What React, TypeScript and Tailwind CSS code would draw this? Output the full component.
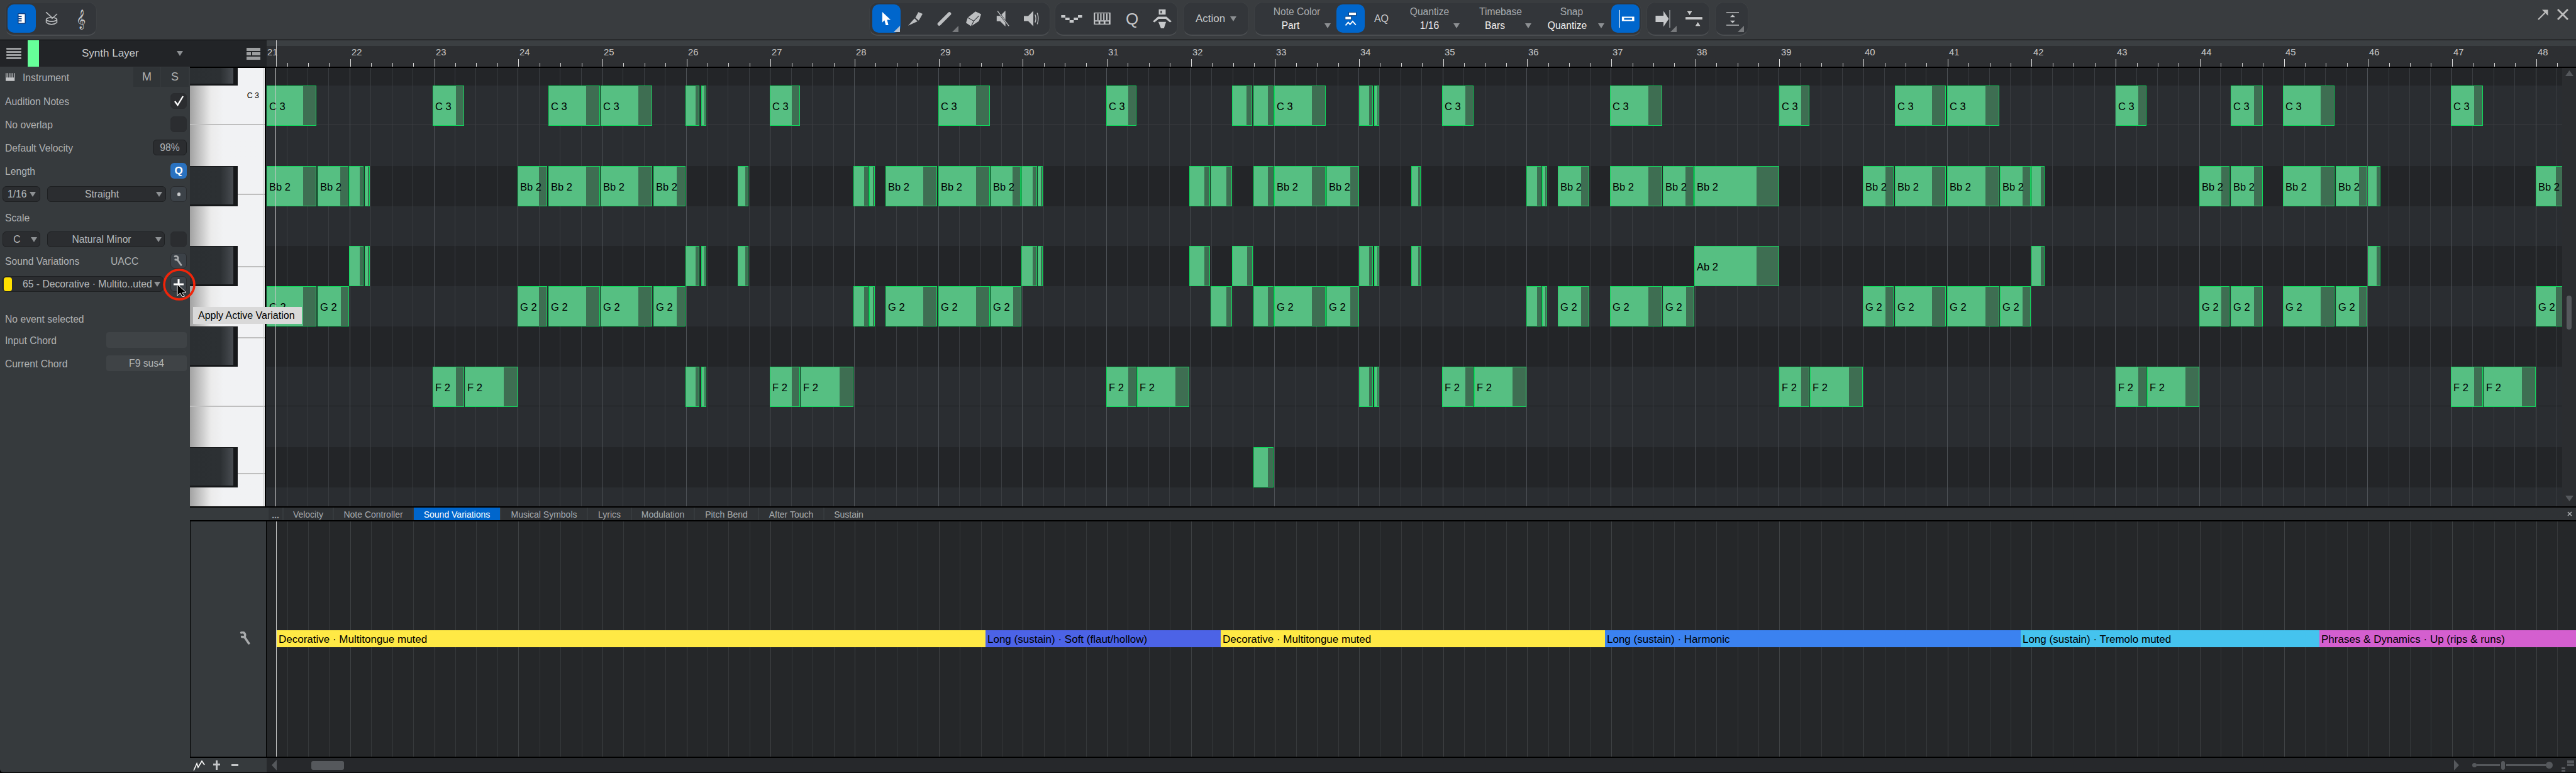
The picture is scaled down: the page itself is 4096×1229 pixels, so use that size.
import React from 'react';

const S = 4096 / 5978;
const GRID_X = 424;
const GRID_Y = 108;

const beatX = (k: number) => 617.7 + 48.775 * k;
const barX = (bar: number) => beatX((bar - 21) * 4);
const rowY = (k: number) => 198 + 93.3 * k;

const cropA = (v: number) => 620 + (v * 2680) / 1568;
const cropB = (v: number) => 3300 + (v * 2678) / 1568;

const rowLabels: Record<number, string> = { 0: 'C 3', 2: 'Bb 2', 4: 'Ab 2', 5: 'G 2', 7: 'F 2', 9: '' };

// note spans per row, measured from the two halves of the roll
const notesA: Record<number, [number, number][]> = {
  0: [[0, 68], [226, 268], [383, 453], [454, 524], [569, 588], [590, 597], [683, 724], [912, 982], [1140, 1181], [1311, 1338], [1340, 1367], [1368, 1438], [1483, 1502], [1504, 1511]],
  2: [[0, 68], [69, 111], [112, 132], [133, 140], [341, 381], [383, 453], [454, 524], [525, 569], [640, 654], [797, 817], [818, 826], [840, 910], [912, 982], [983, 1024], [1025, 1046], [1047, 1054], [1253, 1281], [1282, 1311], [1340, 1367], [1368, 1438], [1439, 1483], [1554, 1567]],
  4: [[112, 132], [133, 140], [569, 588], [590, 597], [640, 654], [1025, 1046], [1047, 1054], [1253, 1281], [1311, 1339], [1483, 1502], [1504, 1511], [1554, 1567]],
  5: [[0, 68], [69, 112], [341, 381], [383, 453], [454, 524], [525, 569], [797, 817], [818, 826], [840, 910], [912, 982], [983, 1025], [1282, 1311], [1340, 1367], [1368, 1438], [1439, 1483]],
  7: [[226, 268], [269, 341], [569, 588], [590, 597], [683, 724], [725, 797], [1140, 1181], [1182, 1253], [1483, 1502], [1504, 1511]],
  9: [[1340, 1367]],
};

const notesB: Record<number, [number, number][]> = {
  0: [[28, 71], [256, 327], [486, 527], [643, 713], [714, 785], [943, 985], [1100, 1143], [1171, 1241], [1399, 1442]],
  2: [[143, 163], [164, 171], [185, 228], [256, 327], [328, 370], [371, 486], [600, 642], [643, 713], [714, 785], [786, 828], [829, 847], [1057, 1098], [1100, 1143], [1171, 1241], [1242, 1285], [1286, 1303], [1514, 1552]],
  4: [[371, 486], [829, 847], [1286, 1303]],
  5: [[143, 163], [164, 171], [185, 228], [256, 327], [328, 371], [600, 642], [643, 713], [714, 785], [786, 828], [1057, 1098], [1100, 1143], [1171, 1241], [1242, 1285], [1514, 1552]],
  7: [[28, 71], [72, 143], [486, 527], [528, 600], [943, 985], [986, 1057], [1399, 1442], [1443, 1514]],
};

const notes = [
  ...Object.entries(notesA).flatMap(([k, spans]) => spans.map(([a, b]) => ({ k: +k, v: b - a, x0: cropA(a), x1: cropA(b) }))),
  ...Object.entries(notesB).flatMap(([k, spans]) => spans.map(([a, b]) => ({ k: +k, v: b - a, x0: cropB(a), x1: cropB(b) }))),
];

const beats = Array.from({ length: 111 }, (_, i) => i + 1);
const bars = Array.from({ length: 28 }, (_, i) => 21 + i);
const darkRows = [-1, 2, 4, 6, 9];
const keyLines = [288, 450, 617, 782, 941, 1098];

const tabs = [
  { label: 'Velocity', w: 'w-[78px]' },
  { label: 'Note Controller', w: 'w-[125px]' },
  { label: 'Sound Variations', w: 'w-[137px]', active: true },
  { label: 'Musical Symbols', w: 'w-[136px]' },
  { label: 'Lyrics', w: 'w-[68px]' },
  { label: 'Modulation', w: 'w-[98px]' },
  { label: 'Pitch Bend', w: 'w-[100px]' },
  { label: 'After Touch', w: 'w-[102px]' },
  { label: 'Sustain', w: 'w-[77px]' },
];

const variations = [
  { label: 'Decorative · Multitongue muted', from: 642, to: 2287, color: '#ffe945' },
  { label: 'Long (sustain) · Soft (flaut/hollow)', from: 2287, to: 2833, color: '#4c63e6' },
  { label: 'Decorative · Multitongue muted', from: 2833, to: 3725, color: '#ffe945' },
  { label: 'Long (sustain) · Harmonic', from: 3725, to: 4689, color: '#3b82f0' },
  { label: 'Long (sustain) · Tremolo muted', from: 4689, to: 5383, color: '#45c3ee' },
  { label: 'Phrases & Dynamics · Up (rips & runs)', from: 5383, to: 5978, color: '#d45fcf' },
];

const Tri = () => (
  <span className="inline-block w-0 h-0 shrink-0 border-l-[5.5px] border-r-[5.5px] border-t-[8px] border-l-transparent border-r-transparent border-t-[#8d9093]" />
);

const Corner = ({ color = '#77797c' }: { color?: string }) => (
  <svg className="absolute right-[1px] bottom-[1px]" width="10" height="10" viewBox="0 0 10 10">
    <polygon points="10,0 10,10 0,10" fill={color} />
  </svg>
);

const Pill: React.FC<{ className?: string; children: React.ReactNode }> = ({ className, children }) => (
  <div className={`flex items-center h-[54px] rounded-[14px] bg-[#33363a] border border-[#3e4144] border-b-2 border-b-[#4a4d50] ${className ?? ''}`}>
    {children}
  </div>
);

const Slot: React.FC<{ className?: string; children: React.ReactNode }> = ({ className, children }) => (
  <div className={`relative flex items-center justify-center h-[45px] shrink-0 ${className ?? ''}`}>{children}</div>
);

const BlueSlot: React.FC<{ children: React.ReactNode }> = ({ children }) => (
  <Slot className="w-[45px] bg-[#0066cc] rounded-[10px]">{children}</Slot>
);

const PianoBlue = () => (
  <svg width="13" height="17" viewBox="0 0 18 24">
    <rect width="18" height="24" rx="2" fill="#0b3f86" />
    <rect x="2" y="2" width="14" height="20" fill="#fff" />
    <rect x="0" y="6" width="9" height="2.5" fill="#0b3f86" />
    <rect x="0" y="11" width="9" height="2.5" fill="#0b3f86" />
    <rect x="0" y="16" width="9" height="2.5" fill="#0b3f86" />
  </svg>
);

const Drum = () => (
  <svg width="20" height="21" viewBox="0 0 28 30" fill="none" stroke="#b9bbbd" strokeWidth="2.4">
    <path d="M2 1 L14 12 M26 5 L15 15" strokeLinecap="round" />
    <ellipse cx="14" cy="17" rx="12" ry="4.5" />
    <path d="M2 17 V24 Q14 33 26 24 V17" />
  </svg>
);

const Cursor = () => (
  <svg width="15" height="21" viewBox="0 0 21 30">
    <path d="M1 0 L20 18 L12 18 L15 30 L9 30 L6 19 L1 24 Z" fill="#fff" />
  </svg>
);

const Knife = () => (
  <svg width="23" height="22" viewBox="0 0 34 32" fill="#bdbfc1">
    <path d="M24 0 L34 4 L25 20 L17 13 Z" />
    <path d="M15 15 L22 22 L0 32 Z" />
  </svg>
);

const Pencil = () => (
  <svg width="23" height="22" viewBox="0 0 34 32">
    <path d="M29 4 L5 28" stroke="#bdbfc1" strokeWidth="8" strokeLinecap="round" />
  </svg>
);

const Eraser = () => (
  <svg width="24" height="24" viewBox="0 0 35 34">
    <path d="M22 0 L35 6 L30 22 L12 34 L0 26 L4 14 Z" fill="#bdbfc1" />
    <path d="M4 14 L18 22 L30 10 M18 22 L12 34" fill="none" stroke="#33363a" strokeWidth="1.6" />
  </svg>
);

const MuteTool = () => (
  <svg width="25" height="25" viewBox="0 0 36 36">
    <path d="M4 12 H12 L24 0 V36 L12 24 H4 Z" fill="#bdbfc1" />
    <path d="M6 1 L32 35" stroke="#33363a" strokeWidth="4" />
    <path d="M6 1 L32 35" stroke="#bdbfc1" strokeWidth="2" />
  </svg>
);

const Speaker = () => (
  <svg width="26" height="25" viewBox="0 0 38 36" fill="none">
    <path d="M0 12 H10 L22 0 V36 L10 24 H0 Z" fill="#bdbfc1" />
    <path d="M26 9 Q30 18 26 27 M31 5 Q36 18 31 31" stroke="#bdbfc1" strokeWidth="2" />
  </svg>
);

const Checker = () => (
  <svg width="34" height="12" viewBox="0 0 50 18" fill="#c6c8ca">
    <rect x="0" y="0" width="10" height="6" />
    <rect x="10" y="6" width="10" height="6" />
    <rect x="20" y="12" width="10" height="6" />
    <rect x="30" y="6" width="10" height="6" />
    <rect x="40" y="0" width="10" height="6" />
  </svg>
);

const KeysIcon = () => (
  <svg width="27" height="19" viewBox="0 0 39 28" fill="#c6c8ca">
    <path d="M0 0 H39 V28 H0 Z M3 2 V18 H36 V2 Z" fillRule="evenodd" />
    <rect x="8" y="2" width="3" height="16" />
    <rect x="15" y="2" width="3" height="16" />
    <rect x="22" y="2" width="3" height="16" />
    <rect x="29" y="2" width="3" height="16" />
    <rect x="3" y="21" width="8" height="5" fill="#33363a" />
    <rect x="15" y="21" width="8" height="5" fill="#33363a" />
    <rect x="27" y="21" width="8" height="5" fill="#33363a" />
  </svg>
);

const Press = () => (
  <svg width="30" height="30" viewBox="0 0 44 44" fill="#c6c8ca">
    <path d="M14 0 H30 V12 H14 Z M18 3 V9 H21 V3 Z" fillRule="evenodd" />
    <path d="M12 17 H32 L44 28 L40 30 L30 22 H14 L4 30 L0 28 Z" />
    <path d="M13 29 H31 L26 44 H19 Z" />
  </svg>
);

const QuantizeNotes = () => (
  <svg width="20" height="22" viewBox="0 0 28 31">
    <rect x="9" y="1" width="17" height="7" fill="#fff" stroke="#0a3f7e" strokeWidth="1.4" />
    <rect x="1" y="10" width="14" height="7" fill="#fff" stroke="#0a3f7e" strokeWidth="1.4" />
    <path d="M2 30 L8 23 L12 28 L18 21 L25 29" fill="none" stroke="#fff" strokeWidth="2.6" />
  </svg>
);

const SnapIcon = () => (
  <svg width="31" height="30" viewBox="0 0 44 42">
    <rect x="8" y="1" width="1.6" height="40" fill="#fff" />
    <rect x="14" y="16" width="28" height="10" fill="#fff" />
    <rect x="19" y="19" width="18" height="4" fill="#0066cc" />
  </svg>
);

const ToLine = () => (
  <svg width="24" height="28" viewBox="0 0 33 40" fill="#c6c8ca">
    <path d="M0 13 H18 V2 L30 20 L18 38 V27 H0 Z" />
    <rect x="31.5" y="0" width="1.5" height="40" />
  </svg>
);

const Split = () => (
  <svg width="29" height="27" viewBox="0 0 42 38">
    <path d="M4 1 H18 L11 12 Z" fill="#c6c8ca" stroke="#111" strokeWidth="1" />
    <rect x="1" y="15" width="40" height="7" fill="#c6c8ca" stroke="#111" strokeWidth="1" />
    <path d="M23 37 H37 L30 26 Z" fill="#c6c8ca" stroke="#111" strokeWidth="1" />
  </svg>
);

const Spread = () => (
  <svg className="ml-[8px]" width="20" height="22" viewBox="0 0 30 32" fill="#c6c8ca">
    <rect y="0" width="30" height="2" />
    <path d="M15 6 L21 12 H9 Z" />
    <path d="M15 26 L9 20 H21 Z" />
    <rect y="30" width="30" height="2" />
  </svg>
);

const Wrench = ({ w = 20, h = 20 }: { w?: number; h?: number }) => (
  <svg width={w} height={h} viewBox="0 0 20 20" fill="none" stroke="#a8aaac" strokeWidth="3.4" strokeLinecap="round">
    <path d="M2.5 1.8 C7.5 0.5 9.5 4 7.5 8.6 L3.4 8" />
    <path d="M7.5 8.6 L14 18" />
  </svg>
);

const Field: React.FC<{ label: string; value: string; box: string; row: string; span: string }> = ({ label, value, box, row, span }) => (
  <div className={`flex flex-col shrink-0 ${box}`}>
    <span className="text-center text-[15.6px] leading-[18px] text-[#a8abae]">{label}</span>
    <div className={`flex items-center mt-[4px] ${row}`}>
      <span className={`text-center text-[15.6px] leading-[18px] text-[#f0f0f0] ${span}`}>{value}</span>
      <Tri />
    </div>
  </div>
);

const Toolbar = () => (
  <div className="flex items-start h-[64px] shrink-0 pt-[3px] pl-[8px] bg-[#393c3f] border-b border-black">
    <Pill className="w-[146px] pl-[3px]">
      <BlueSlot><PianoBlue /></BlueSlot>
      <Slot className="w-[47px] ml-[1px]"><Drum /></Slot>
      <Slot className="w-[47px]">
        <span className="text-[26px] leading-none text-[#c6c8ca] font-['DejaVu_Sans','Noto_Sans',sans-serif]">𝄞</span>
      </Slot>
    </Pill>

    <Pill className="w-[288px] ml-[1228px] pl-[4px]">
      <BlueSlot>
        <Cursor />
        <Corner color="#b9c4d2" />
      </BlueSlot>
      <Slot className="w-[46.5px]"><Knife /></Slot>
      <Slot className="w-[46.5px]">
        <Pencil />
        <Corner />
      </Slot>
      <Slot className="w-[46.5px]"><Eraser /></Slot>
      <Slot className="w-[46.5px]"><MuteTool /></Slot>
      <Slot className="w-[46.5px]"><Speaker /></Slot>
    </Pill>

    <Pill className="w-[196px] ml-[7px] pl-[2px]">
      <Slot className="w-[48px]"><Checker /></Slot>
      <Slot className="w-[48px]"><KeysIcon /></Slot>
      <Slot className="w-[48px]">
        <span className="text-[26px] leading-none text-[#c6c8ca]">Q</span>
      </Slot>
      <Slot className="w-[48px]"><Press /></Slot>
    </Pill>

    <Pill className="w-[105px] ml-[8px] pl-[19px]">
      <span className="text-[17px] text-[#c8c8c8]">Action</span>
      <span className="ml-[8px] flex"><Tri /></span>
    </Pill>

    <Pill className="w-[616px] ml-[8px] pl-[8px]">
      <Field label="Note Color" value="Part" box="w-[118px]" row="" span="w-[98px] mr-[5px]" />
      <div className="ml-[4px]"><BlueSlot><QuantizeNotes /></BlueSlot></div>
      <span className="w-[53px] text-center text-[16px] text-[#cfcfcf]">AQ</span>
      <Field label="Quantize" value="1/16" box="w-[100px]" row="pl-[12px]" span="w-[76px]" />
      <Field label="Timebase" value="Bars" box="w-[102px] ml-[12px]" row="pl-[6px]" span="w-[72px] mr-[12px]" />
      <Field label="Snap" value="Quantize" box="w-[108px] ml-[8px]" row="" span="w-[94px] mr-[2px]" />
      <div className="ml-[9px]"><BlueSlot><SnapIcon /></BlueSlot></div>
    </Pill>

    <Pill className="w-[101px] ml-[8px]">
      <Slot className="w-[47px] ml-[1px]">
        <ToLine />
        <Corner />
      </Slot>
      <Slot className="w-[52px]"><Split /></Slot>
    </Pill>

    <Pill className="w-[53px] ml-[8px]">
      <Slot className="w-[46px]">
        <Spread />
        <Corner />
      </Slot>
    </Pill>

    <div className="flex items-center ml-auto mr-[11px] mt-[10px] gap-[11px]">
      <svg width="20" height="20" viewBox="0 0 20 20" fill="none" stroke="#bcbcbc" strokeWidth="2.2">
        <path d="M2 18 L15 5" />
        <path d="M8 2.5 H17.5 V12 Z" fill="#bcbcbc" stroke="none" />
      </svg>
      <svg width="20" height="20" viewBox="0 0 20 20" stroke="#bcbcbc" strokeWidth="2.8">
        <path d="M2 2 L18 18 M18 2 L2 18" />
      </svg>
    </div>
  </div>
);

const HeaderRow = () => (
  <div className="flex h-[42px] shrink-0">
    <div className="flex items-center w-[424px] shrink-0 pl-[10px] bg-[#222427]">
      <div className="flex flex-col gap-[2px] w-[24px]">
        <span className="h-[3px] bg-[#9c9ea0] rounded-[1px]" />
        <span className="h-[3px] bg-[#9c9ea0] rounded-[1px]" />
        <span className="h-[3px] bg-[#9c9ea0] rounded-[1px]" />
        <span className="h-[3px] bg-[#9c9ea0] rounded-[1px]" />
      </div>
      <span className="w-[18px] h-full ml-[10px] bg-[#66ff99]" />
      <span className="ml-[68px] w-[90px] text-[17px] whitespace-nowrap text-[#c9cbcd]">Synth Layer</span>
      <span className="ml-[61px] flex"><Tri /></span>
      <div className="flex flex-col gap-[2px] w-[22px] ml-[101px]">
        <span className="h-[5px] bg-[#9c9ea0]" />
        <span className="flex gap-[2px] h-[5px]">
          <span className="w-[7px] bg-[#9c9ea0]" />
          <span className="flex-1 bg-[#9c9ea0]" />
        </span>
        <span className="h-[5px] bg-[#9c9ea0]" />
      </div>
    </div>
    <div className="relative flex-1 overflow-hidden bg-[#2d2f32]">
      <div className="h-[9px] bg-[#3b3f42]" />
      {bars.map((bar) => (
        <span
          key={bar}
          className="absolute top-[10px] text-[14.8px] leading-[18px] text-[#c8c8c8]"
          style={{ left: Math.round((barX(bar) + 3) * S - GRID_X) }}
        >
          {bar}
        </span>
      ))}
      {beats.map((k) => (
        <span
          key={k}
          className={k % 4 === 0 ? 'absolute bottom-0 w-[1px] h-[12px] bg-[#e0e0e0]' : 'absolute bottom-0 w-[1px] h-[6px] bg-[#d8d8d8]'}
          style={{ left: Math.round(beatX(k) * S - GRID_X) }}
        />
      ))}
      <span className="absolute top-0 bottom-0 left-[15px] w-[1px] bg-[#c8c8c8]" />
    </div>
  </div>
);

const selectCls = 'flex items-center h-[25px] bg-[#2b2d30] border border-[#1e2022] rounded-[6px] text-[15.7px] text-[#b6b8ba]';
const squareCls = 'flex items-center justify-center w-[26px] h-[25px] rounded-[6px] border border-[#2a2c2f]';

const Label: React.FC<{ className?: string; children: React.ReactNode }> = ({ className, children }) => (
  <span className={`pt-[2px] ${className ?? ''}`}>{children}</span>
);

const LeftPanel = () => (
  <div className="flex flex-col w-[302px] shrink-0 rounded-bl-[5px] bg-[#363a3d] text-[15.7px] text-[#b0b2b4]">
    <div className="flex items-center h-[31px] pl-[9px] mt-[1px]">
      <svg width="15" height="13" viewBox="0 0 22 18" fill="#c2c4c6">
        <path d="M0 0 H2 V10 H4 V0 H6 V10 H9 V0 H11 V10 H14 V0 H16 V10 H19 V0 H21 V18 H0 Z" />
      </svg>
      <Label className="ml-[12px]">Instrument</Label>
      <span className="flex items-center justify-center w-[43px] h-full ml-auto bg-[#303437] text-[18px]">M</span>
      <span className="flex items-center justify-center w-[44px] h-full ml-[1px] mr-[2px] bg-[#303437] text-[18px]">S</span>
    </div>

    <div className="flex items-center justify-between h-[25px] mt-[10px] pl-[8px] pr-[5px]">
      <Label>Audition Notes</Label>
      <span className={`${squareCls} bg-[#2b2d30] border-[#1e2022]`}>
        <svg width="17" height="17" viewBox="0 0 17 17" fill="none" stroke="#fff" strokeWidth="2.4">
          <path d="M2 9 L6.5 15 L15 1" />
        </svg>
      </span>
    </div>
    <div className="flex items-center justify-between h-[25px] mt-[12px] pl-[8px] pr-[5px]">
      <Label>No overlap</Label>
      <span className={`${squareCls} bg-[#2b2d30] border-[#1e2022]`} />
    </div>
    <div className="flex items-center justify-between h-[25px] mt-[12px] pl-[8px] pr-[5px]">
      <Label>Default Velocity</Label>
      <span className="flex items-center justify-center w-[54px] h-[25px] bg-[#2b2d30] border border-[#1e2022] rounded-[6px]">98%</span>
    </div>
    <div className="flex items-center justify-between h-[25px] mt-[12px] pl-[8px] pr-[5px]">
      <Label>Length</Label>
      <span className="flex items-center justify-center w-[26px] h-[25px] rounded-[6px] bg-[#2a72c0] text-[17px] font-bold text-white">Q</span>
    </div>

    <div className="flex items-center h-[25px] mt-[12px] pl-[4px] pr-[5px]">
      <div className={`${selectCls} w-[60px] pl-[7px] gap-[4px]`}>
        <span>1/16</span>
        <Tri />
      </div>
      <div className={`${selectCls} w-[189px] ml-[11px]`}>
        <span className="w-[172px] text-center">Straight</span>
        <Tri />
      </div>
      <span className={`${squareCls} ml-auto bg-[#3c4248]`}>
        <span className="w-[5px] h-[6px] rounded-full bg-[#c8cacc]" />
      </span>
    </div>

    <div className="flex items-center h-[25px] mt-[12px] pl-[8px]"><Label>Scale</Label></div>

    <div className="flex items-center h-[25px] mt-[10px] pl-[4px] pr-[5px]">
      <div className={`${selectCls} w-[60px]`}>
        <span className="w-[44px] text-center">C</span>
        <Tri />
      </div>
      <div className={`${selectCls} w-[187px] ml-[11px]`}>
        <span className="w-[171px] text-center">Natural Minor</span>
        <Tri />
      </div>
      <span className={`${squareCls} ml-auto bg-[#2b2d30] border-[#1e2022]`} />
    </div>

    <div className="flex items-center h-[25px] mt-[9px] pl-[8px] pr-[5px]">
      <Label className="w-[168px]">Sound Variations</Label>
      <Label>UACC</Label>
      <span className={`${squareCls} ml-auto bg-[#3c4248]`}><Wrench w={17} h={17} /></span>
    </div>

    <div className="flex items-center h-[25px] mt-[12px] pl-[4px] pr-[5px]">
      <div className={`${selectCls} w-[256px] pl-[1px]`}>
        <span className="w-[13px] h-[22px] rounded-[4px] bg-[#ffe000]" />
        <span className="ml-[17px] w-[206px] whitespace-nowrap">65 - Decorative · Multito..uted</span>
        <span className="ml-[3px] flex"><Tri /></span>
      </div>
      <span className={`${squareCls} ml-auto bg-[#3c4248]`}>
        <svg width="16" height="16" viewBox="0 0 16 16" fill="#fff">
          <rect x="6.5" y="0" width="3" height="16" />
          <rect x="0" y="6.5" width="16" height="3" />
        </svg>
      </span>
    </div>

    <div className="flex items-center h-[25px] mt-[30px] pl-[8px]"><Label>No event selected</Label></div>

    <div className="flex items-center justify-between h-[25px] mt-[9px] pl-[8px] pr-[5px]">
      <Label>Input Chord</Label>
      <span className="w-[128px] h-[25px] rounded-[4px] bg-[#3f4346]" />
    </div>
    <div className="flex items-center justify-between h-[25px] mt-[12px] pl-[8px] pr-[5px]">
      <Label>Current Chord</Label>
      <span className="flex items-center justify-center w-[128px] h-[25px] pt-[1px] rounded-[4px] bg-[#3f4346]">F9 sus4</span>
    </div>
  </div>
);

const Piano = () => (
  <div className="relative w-[121px] shrink-0 overflow-hidden border-r-2 border-black bg-linear-to-r from-[#a2a2a2] via-[#ebebeb] via-[28%] to-[#f1f2f4] to-[45%]">
    {keyLines.map((y) => (
      <span key={y} className="absolute left-0 right-0 h-[2px] bg-[#bfbfbf]" style={{ top: Math.round(y * S - GRID_Y) }} />
    ))}
    <span className="absolute right-[1px] top-0 bottom-0 w-[1px] bg-[#c4c4c4]" />
    <span className="absolute right-[9px] top-[37px] text-[12.4px] leading-[14px] text-black">C 3</span>
    {darkRows.map((k) => (
      <div
        key={k}
        className="absolute left-0 w-[76px] bg-[#16181a]"
        style={{ top: Math.round(rowY(k) * S - GRID_Y), height: 64 }}
      >
        <div className="h-[60px] w-[69px] mt-[1px] bg-linear-to-r from-[#2b2f32] via-[#2c3033] via-[70%] to-[#484c51]" />
      </div>
    ))}
  </div>
);

const Note: React.FC<{ k: number; v: number; x0: number; x1: number }> = ({ k, v, x0, x1 }) => {
  const left = Math.round(x0 * S - GRID_X);
  const width = Math.round(x1 * S - GRID_X) - left;
  return (
    <div
      className="absolute h-[64px] overflow-hidden flex items-center pl-[3px] border border-[#10d95c] bg-[#56bf82]"
      style={{ left, width, top: Math.round(rowY(k) * S - GRID_Y) }}
    >
      <span className="absolute right-0 top-0 bottom-0 w-[26%] bg-[#3e6e52]" />
      {v >= 35 && <span className="relative pt-[2px] text-[16.5px] whitespace-nowrap text-black">{rowLabels[k]}</span>}
    </div>
  );
};

const TopSection = () => (
  <div className="flex h-[701px] shrink-0 border-y-2 border-black">
    <Piano />
    <div className="relative flex-1 overflow-hidden bg-[#2a2d31]">
      {darkRows.map((k) => (
        <span key={k} className="absolute left-0 right-0 h-[64px] bg-[#232528]" style={{ top: Math.round(rowY(k) * S - GRID_Y) }} />
      ))}
      <span className="absolute left-0 right-0 top-[90px] h-[1px] bg-[#3b3d40]" />
      <span className="absolute left-0 right-0 top-[537px] h-[1px] bg-[#1d2020]" />
      {beats.map((k) => (
        <span
          key={k}
          className={k % 4 === 0 ? 'absolute top-0 bottom-0 w-[1px] bg-[#4d5156]' : 'absolute top-0 bottom-0 w-[1px] bg-[#3a3d41]'}
          style={{ left: Math.round(beatX(k) * S - GRID_X) }}
        />
      ))}
      {notes.map((n, i) => (
        <Note key={i} {...n} />
      ))}
      <span className="absolute top-0 bottom-0 left-[15px] w-[1px] bg-[#c8c8c8]" />
    </div>
    <div className="flex flex-col items-center w-[22px] shrink-0 pt-[4px] pb-[8px] bg-[#2b2d30]">
      <svg width="13" height="9" viewBox="0 0 13 9" fill="#55585c"><path d="M6.5 0 L13 9 H0 Z" /></svg>
      <span className="w-[8px] h-[54px] mt-[349px] rounded-[4px] bg-[#55585c]" />
      <svg className="mt-auto" width="13" height="9" viewBox="0 0 13 9" fill="#55585c"><path d="M0 0 H13 L6.5 9 Z" /></svg>
    </div>
  </div>
);

const TabStrip = () => (
  <div className="flex h-[22px] shrink-0 border-b-2 border-black bg-[#2f3235] text-[14px] text-[#a8abae]">
    <div className="w-[123px] shrink-0 bg-[#363a3d]" />
    <div className="flex gap-[2px] pl-[2px] bg-[#363a3d]">
      <span className="flex items-end justify-center w-[22px] pb-[1px] bg-[#2f3235] font-bold leading-none">...</span>
      {tabs.map((t) => (
        <span
          key={t.label}
          className={`flex items-center justify-center pt-[2px] whitespace-nowrap ${t.w} ${t.active ? 'bg-[#0066cc] text-white' : 'bg-[#2f3235]'}`}
        >
          {t.label}
        </span>
      ))}
    </div>
    <div className="flex items-center justify-end flex-1 pr-[6px]">
      <svg width="8" height="8" viewBox="0 0 8 8" stroke="#a8abae" strokeWidth="1.6"><path d="M1 1 L7 7 M7 1 L1 7" /></svg>
    </div>
  </div>
);

const LowerPane = () => (
  <div className="flex h-[376px] shrink-0 border-b-2 border-black">
    <div className="flex justify-end w-[122px] shrink-0 pt-[175px] pr-[21px] border-x border-black bg-[#363a3d]">
      <Wrench w={21} h={21} />
    </div>
    <div className="relative flex-1 overflow-hidden bg-[#252729]">
      {beats.map((k) => (
        <span
          key={k}
          className={k % 4 === 0 ? 'absolute top-0 bottom-0 w-[1px] bg-[#3f4244]' : 'absolute top-0 bottom-0 w-[1px] bg-[#36393b]'}
          style={{ left: Math.round(beatX(k) * S - GRID_X) }}
        />
      ))}
      {variations.map((b) => {
        const left = Math.round(b.from * S - GRID_X);
        return (
          <div
            key={b.from}
            className="absolute top-[173px] h-[27px] flex items-center pl-[3px] overflow-hidden"
            style={{ left, width: Math.round(b.to * S - GRID_X) - left, backgroundColor: b.color }}
          >
            <span className="pt-[2px] text-[17px] whitespace-nowrap text-black">{b.label}</span>
          </div>
        );
      })}
      <span className="absolute top-0 bottom-0 left-[15px] w-[1px] bg-[#c8c8c8]" />
    </div>
  </div>
);

const BottomBar = () => (
  <div className="flex flex-1">
    <div className="flex items-center w-[122px] shrink-0 pl-[5px] bg-[#363a3d]">
      <svg width="19" height="16" viewBox="0 0 19 16" fill="none" stroke="#fff" strokeWidth="1.6"><path d="M1 16 L6 5 L8 11 L14 1 L18 7" /></svg>
      <svg className="ml-[13px]" width="11" height="15" viewBox="0 0 11 15" fill="#c4c6c8">
        <rect x="4" y="0" width="3" height="15" />
        <rect x="0" y="5" width="11" height="3" />
      </svg>
      <span className="ml-[18px] w-[11px] h-[3px] bg-[#c4c6c8]" />
    </div>
    <div className="flex items-center flex-1 pl-[8px] pr-[3px] bg-[#26282b]">
      <svg width="8" height="17" viewBox="0 0 8 17" fill="#55585c"><path d="M8 0 V17 L0 8.5 Z" /></svg>
      <span className="w-[52px] h-[14px] ml-[55px] rounded-[3px] bg-[#55585c]" />
      <svg className="ml-auto" width="8" height="17" viewBox="0 0 8 17" fill="#55585c"><path d="M0 0 L8 8.5 L0 17 Z" /></svg>
      <span className="w-[7px] h-[7px] ml-[21px] rounded-full bg-[#55585c]" />
      <span className="w-[37px] h-[3px] bg-[#55585c]" />
      <span className="w-[6px] h-[14px] ml-[2px] rounded-[3px] bg-[#55585c]" />
      <span className="w-[63px] h-[3px] ml-[2px] bg-[#55585c]" />
      <span className="w-[11px] h-[11px] rounded-full bg-[#55585c]" />
      <div className="flex items-end gap-[3px] ml-[14px]">
        <div className="flex flex-col gap-[1px] w-[6px] mb-[-2px]">
          <span className="h-[3px] bg-[#55585c]" />
          <span className="h-[3px] bg-[#55585c]" />
        </div>
        <div className="flex flex-col gap-[1px] w-[11px] mb-[7px]">
          <span className="h-[4px] bg-[#55585c]" />
          <span className="h-[4px] bg-[#55585c]" />
        </div>
      </div>
    </div>
  </div>
);

const Overlays = () => (
  <>
    <svg className="absolute left-[259px] top-[427px]" width="52" height="51" viewBox="0 0 52 51" fill="none">
      <ellipse cx="26" cy="25.5" rx="24" ry="23.5" stroke="#f0250a" strokeWidth="3.6" />
    </svg>
    <svg className="absolute left-[281px] top-[452px]" width="16" height="20" viewBox="0 0 16 20">
      <path d="M1 0 L15 13 L9 13.5 L12.5 19 L9 20 L5.5 14 L1 18 Z" fill="#000" stroke="#fff" strokeWidth="1" />
    </svg>
    <div className="absolute left-[307px] top-[488px] flex items-center w-[173px] h-[27px] pl-[8px] bg-[#d9d9d9] text-[16px] whitespace-nowrap text-black">
      Apply Active Variation
    </div>
  </>
);

export default function App() {
  return (
    <div className="relative flex flex-col w-[4096px] h-[1229px] overflow-hidden border-b border-black bg-black font-['Liberation_Sans',Arial,sans-serif]">
      <Toolbar />
      <HeaderRow />
      <div className="flex flex-1 min-h-0">
        <LeftPanel />
        <div className="flex flex-col flex-1 min-w-0">
          <TopSection />
          <TabStrip />
          <LowerPane />
          <BottomBar />
        </div>
      </div>
      <Overlays />
    </div>
  );
}
